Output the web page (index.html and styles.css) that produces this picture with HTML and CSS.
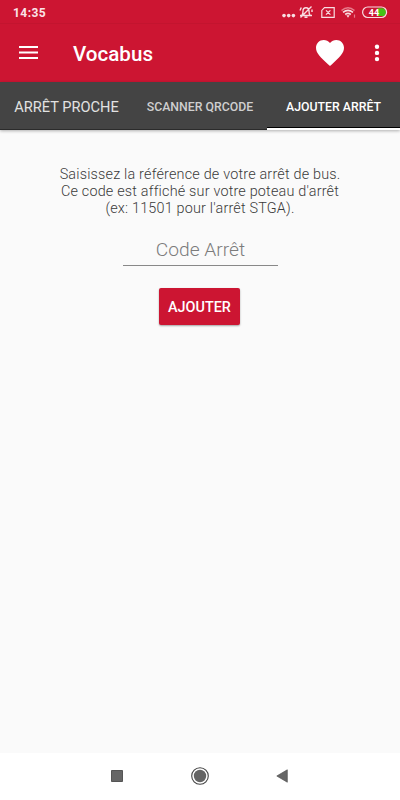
FILE: index.html
```html
<!DOCTYPE html>
<html lang="fr">
<head>
<meta charset="utf-8">
<title>Vocabus</title>
<link rel="stylesheet" href="styles.css">
</head>
<body>
<div class="status">
  <span class="clock">14:35</span>
  <svg class="status-icons" width="130" height="24" viewBox="0 0 130 24" fill="none" stroke="#f8dde2" stroke-width="1.2">
    <g fill="#f8dde2" stroke="none"><circle cx="14" cy="15.6" r="1.8"/><circle cx="18.7" cy="15.6" r="1.8"/><circle cx="23.4" cy="15.6" r="1.8"/></g>
    <path d="M30 15.500h12M32 15c1-1 1-2 1-4 0-2 1.200-3.300 3-3.300s3 1.300 3 3.300c0 2 0 3 1 4M34.500 17.200h3M30.500 17.500 41.500 6.500M30 10.500l1.300-3M42 9.500v2.500" stroke-width="1.400"/>
    <path d="M54.500 7.600h9.700v9.800h-12.400v-7zM56 10.300l4.400 4.400M60.400 10.300 56 14.700"/>
    <path d="M71.500 10.500q6.500-5.500 13 0" stroke="#e77a8a" stroke-width="1.500"/>
    <path d="M73 12.400q5-4 10 0M75.200 14.500q2.800-2.200 5.600 0" stroke-width="1.600"/>
    <path d="M76.400 15.300h3.200L78 17.800z" fill="#f8dde2" stroke="none"/>
    <path d="M84.500 14.500v3.200" stroke="#e77a8a"/>
    <path d="M107.500 8.300h4.500a3.900 3.900 0 0 1 0 7.800h-4.500z" fill="#43c315" stroke="none"/>
    <rect x="92.600" y="7" width="24" height="10.500" rx="5.200"/>
    <text class="battery" x="104" y="15.500" text-anchor="middle">44</text>
  </svg>
</div>
<header class="appbar">
  <svg class="menu" width="19" height="14" viewBox="0 0 19 14" fill="#fff"><path d="M0 0h19v2H0zM0 5.500h19v2H0zM0 11h19v2H0z"/></svg>
  <h1 class="title">Vocabus</h1>
  <svg class="heart" width="28" height="26" viewBox="2 3 20 18.350" preserveAspectRatio="none" fill="#fff"><path d="M12 21.350l-1.450-1.320C5.400 15.360 2 12.280 2 8.500 2 5.420 4.420 3 7.500 3c1.740 0 3.410.81 4.500 2.090C13.090 3.810 14.760 3 16.500 3 19.580 3 22 5.420 22 8.500c0 3.780-3.400 6.860-8.550 11.540z"/></svg>
  <svg class="more" width="6" height="18" viewBox="0 0 6 18" fill="#fff"><circle cx="3" cy="2.700" r="2.200"/><circle cx="3" cy="8.900" r="2.200"/><circle cx="3" cy="15.100" r="2.200"/></svg>
</header>
<nav class="tabs">
  <div class="tab tab-large"><span>ARRÊT PROCHE</span></div>
  <div class="tab"><span>SCANNER QRCODE</span></div>
  <div class="tab tab-active"><span>AJOUTER ARRÊT</span></div>
</nav>
<main class="content">
  <p class="hint">Saisissez la référence de votre arrêt de bus.<br>Ce code est affiché sur votre poteau d'arrêt<br>(ex: 11501 pour l'arrêt STGA).</p>
  <div class="field">Code Arrêt</div>
  <div class="button">AJOUTER</div>
</main>
<footer class="navbar">
  <svg width="12" height="12" viewBox="0 0 12 12"><path d="M.5.5h11v11H.5z" fill="#666" stroke="#555"/></svg>
  <svg width="18" height="18" viewBox="0 0 18 18"><circle cx="9" cy="9" r="8.300" fill="none" stroke="#444" stroke-width="1.100"/><circle cx="9" cy="9" r="6.200" fill="#646464"/></svg>
  <svg width="12" height="14" viewBox="0 0 12 14"><path d="M.8 7 11.300 .8v12.400z" fill="#666" stroke="#555" stroke-width=".7"/></svg>
</footer>
</body>
</html>
```
FILE: styles.css
```css
* { box-sizing: border-box; }
body {
  margin: 0;
  width: 400px;
  height: 800px;
  display: flex;
  flex-direction: column;
  background: #fafafa;
  font-family: Roboto, sans-serif;
  overflow: hidden;
}
.status {
  height: 24px;
  flex: none;
  display: flex;
  justify-content: space-between;
  background: #cc1532;
  border-bottom: 1px solid #c3142f;
}
.clock {
  margin-left: 13px;
  font-size: 12px;
  font-weight: 700;
  line-height: 26px;
  letter-spacing: 0.45px;
  color: #fae4e8;
}
.battery {
  font: 700 9px Roboto, sans-serif;
  fill: #fff;
  stroke: none;
}
.appbar {
  height: 58px;
  flex: none;
  display: flex;
  align-items: center;
  padding: 0 20px 0 19px;
  background: #cc1532;
}
.menu { margin-top: -1px; }
.title {
  margin: 2px auto 0 35px;
  font-size: 20.6px;
  font-weight: 500;
  color: #fff;
}
.heart { margin-right: 30px; }
.tabs {
  height: 48px;
  flex: none;
  display: grid;
  grid-template-columns: 133px 134px 133px;
  background: #444;
  box-shadow: 0 1px 3px rgba(0, 0, 0, 0.3);
}
.tab {
  display: flex;
  align-items: center;
  justify-content: center;
  padding-top: 2px;
  border-bottom: 1px solid #2b2b2b;
  font-size: 12.3px;
  font-weight: 500;
  color: #cfcfcf;
  white-space: nowrap;
}
.tab-large {
  font-size: 14.6px;
  font-weight: 400;
  color: #e2e2e2;
}
.tab-active {
  padding-top: 3px;
  border-bottom: 2px solid #fff;
  box-shadow: inset 0 -1px #000;
  color: #fff;
}
.content {
  flex: 1;
  display: flex;
  flex-direction: column;
  align-items: center;
}
.hint {
  margin: 36px 0 0;
  font-size: 14.4px;
  font-weight: 300;
  line-height: 17px;
  letter-spacing: 0.19px;
  text-align: center;
  color: #3a3a3a;
}
.field {
  width: 155px;
  height: 49px;
  padding: 19px 0 0 1px;
  border-bottom: 1px solid #888;
  font-size: 19.2px;
  font-weight: 300;
  line-height: 28px;
  text-align: center;
  color: #7c7c7c;
}
.button {
  width: 81px;
  height: 37px;
  margin: 22px 1px 0 0;
  border-radius: 2px;
  background: #cc1532;
  box-shadow: 0 1px 2px rgba(0, 0, 0, 0.35);
  font-size: 14.4px;
  font-weight: 500;
  line-height: 39px;
  text-align: center;
  color: #fff;
}
.navbar {
  height: 47px;
  flex: none;
  display: flex;
  align-items: center;
  justify-content: space-between;
  padding: 0 112px 2px 111px;
  background: #fff;
}
```
